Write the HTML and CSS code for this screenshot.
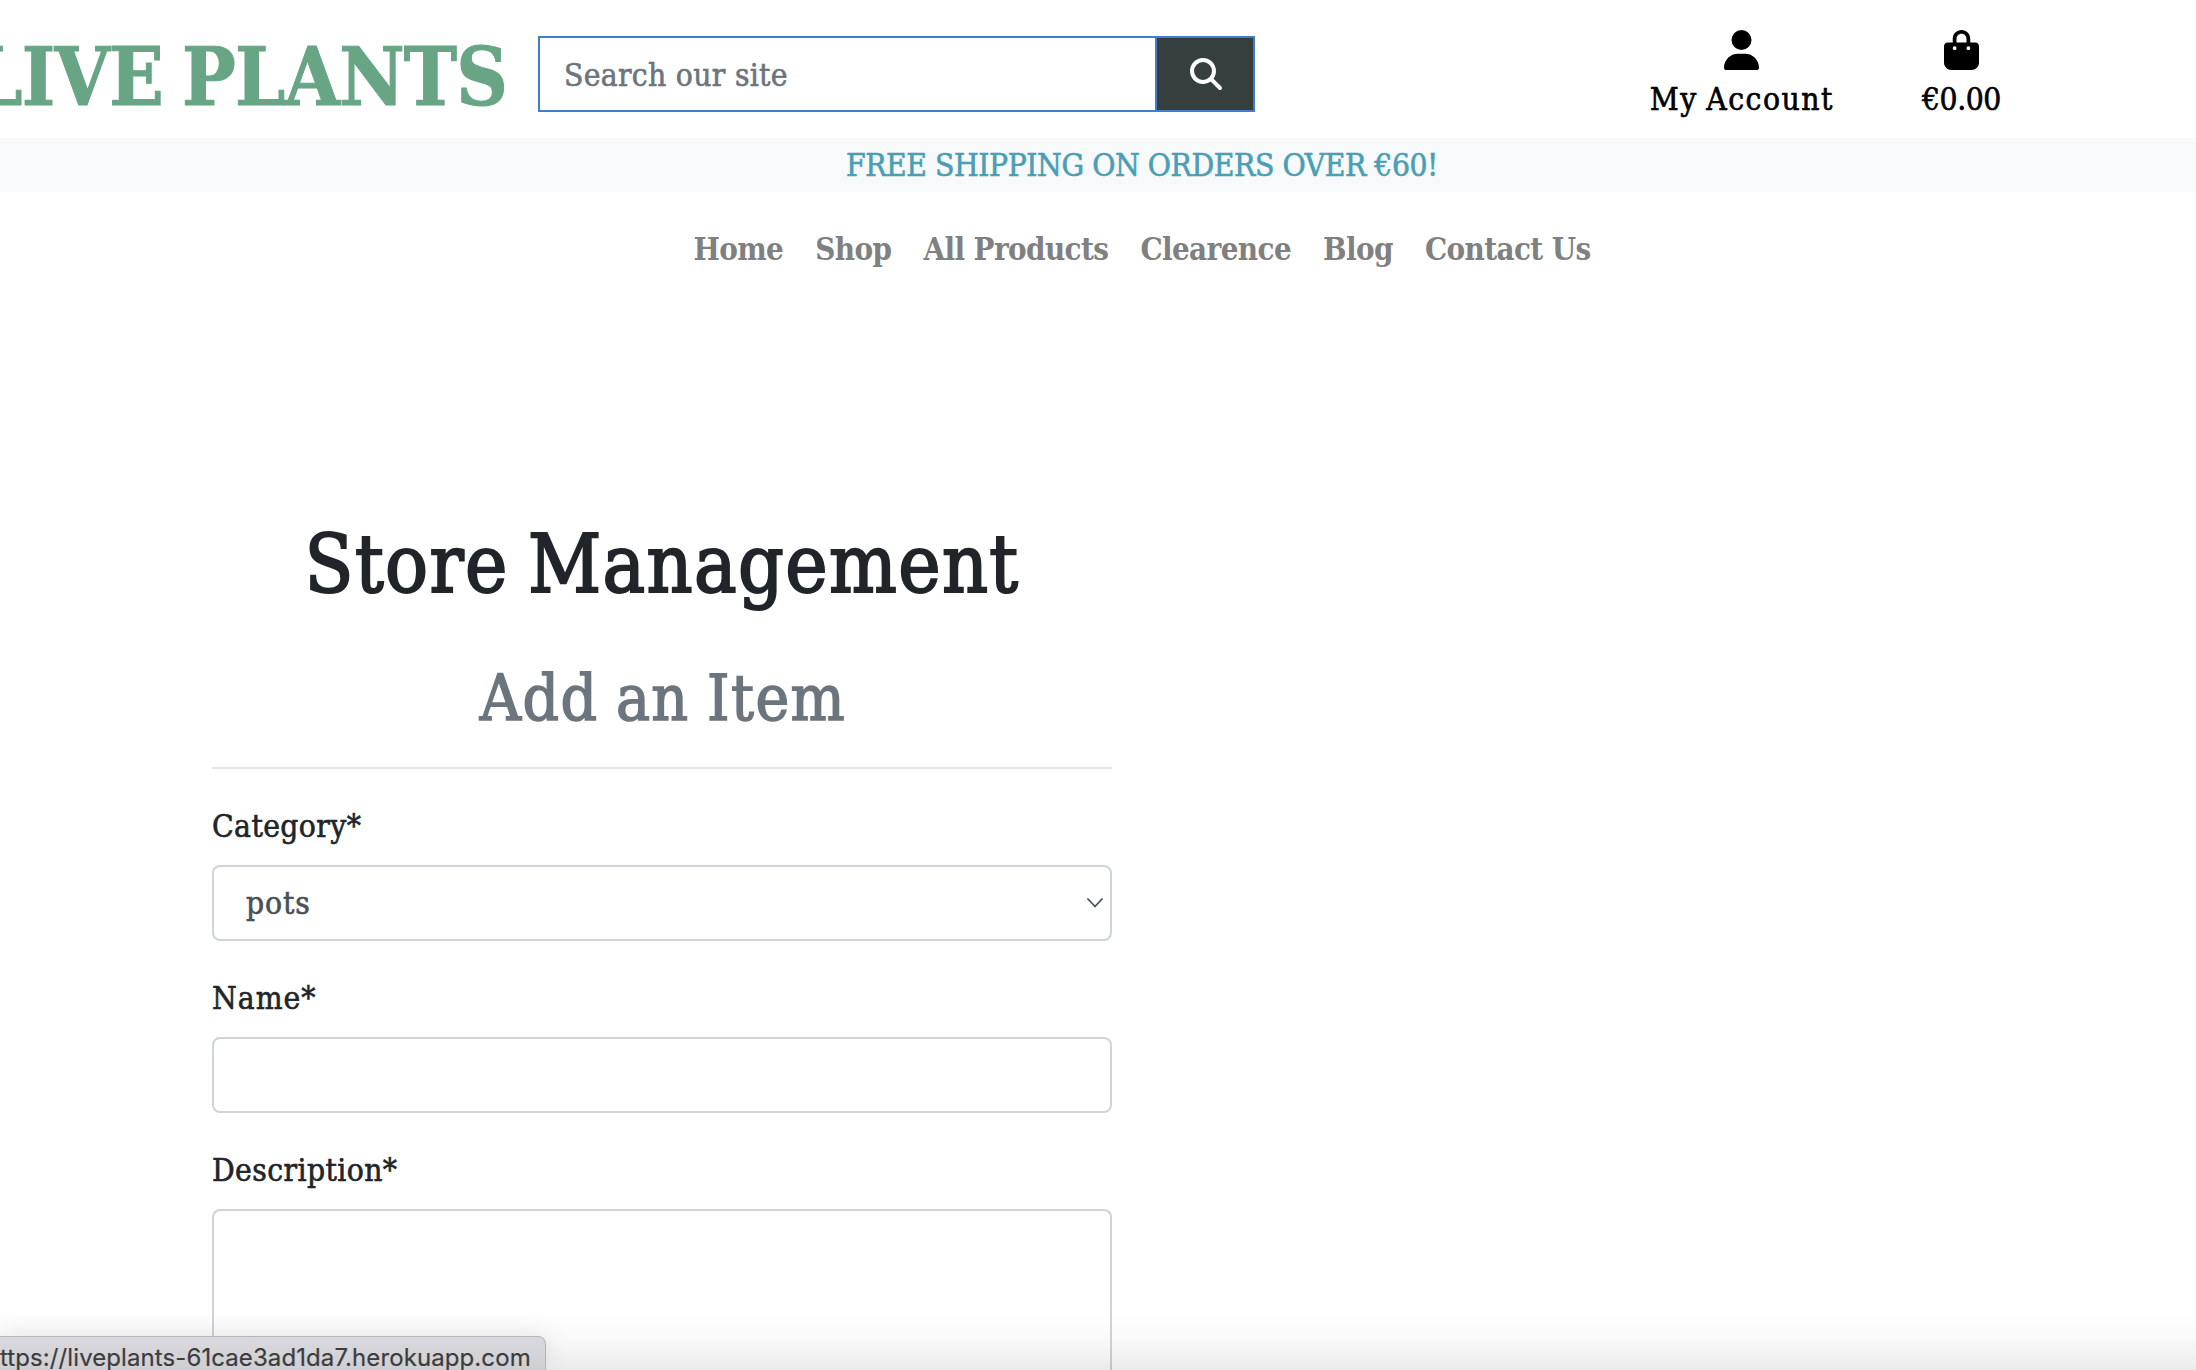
FILE: index.html
```html
<!DOCTYPE html>
<html lang="en">
<head>
<meta charset="utf-8">
<title>Live Plants</title>
<link rel="stylesheet" href="styles.css">
</head>
<body>
<header class="header">
  <a class="logo">LIVE PLANTS</a>
  <form class="search">
    <input class="search-input" type="text" placeholder="Search our site">
    <button class="search-button" type="button" aria-label="Search">
      <svg viewBox="0 0 512 512" width="32" height="32"><path fill="#fff" d="M416 208c0 45.900-14.900 88.300-40 122.700L502.600 457.400c12.500 12.500 12.500 32.800 0 45.300s-32.800 12.500-45.300 0L330.700 376c-34.400 25.200-76.800 40-122.700 40C93.100 416 0 322.900 0 208S93.100 0 208 0S416 93.100 416 208zM208 352a144 144 0 1 0 0-288 144 144 0 1 0 0 288z"/></svg>
    </button>
  </form>
  <div class="links">
    <a class="link">
      <svg viewBox="0 0 448 512" width="35" height="40"><path d="M224 256A128 128 0 1 0 224 0a128 128 0 1 0 0 256zm-45.700 48C79.800 304 0 383.800 0 482.300C0 498.700 13.300 512 29.700 512H418.300c16.400 0 29.700-13.300 29.700-29.700C448 383.800 368.200 304 269.700 304H178.300z"/></svg>
      <span class="account">My Account</span>
    </a>
    <a class="link">
      <svg viewBox="0 0 448 512" width="35" height="40"><path d="M160 112c0-35.300 28.700-64 64-64s64 28.700 64 64v48H160V112zm-48 48H48c-26.500 0-48 21.500-48 48V416c0 53 43 96 96 96H352c53 0 96-43 96-96V208c0-26.500-21.500-48-48-48H336V112C336 50.100 285.900 0 224 0S112 50.100 112 112v48zm24 48a24 24 0 1 1 0 48 24 24 0 1 1 0-48zm152 24a24 24 0 1 1 48 0 24 24 0 1 1 -48 0z"/></svg>
      <span class="total">€0.00</span>
    </a>
  </div>
</header>
<div class="banner">FREE SHIPPING ON ORDERS OVER €60!</div>
<nav class="nav">
  <a>Home</a><a>Shop</a><a>All Products</a><a>Clearence</a><a>Blog</a><a>Contact Us</a>
</nav>
<main class="main">
  <h1 class="title">Store Management</h1>
  <h2 class="subtitle">Add an Item</h2>
  <hr class="rule">
  <div class="group">
    <label class="label">Category*</label>
    <div class="control select">
      <span>pots</span>
      <svg viewBox="0 0 16 10" width="16" height="10"><path d="M1 1l7 7.500 7-7.500" fill="none" stroke="#495057" stroke-width="1.800" stroke-linecap="round" stroke-linejoin="round"/></svg>
    </div>
  </div>
  <div class="group">
    <label class="label name">Name*</label>
    <input class="control" type="text">
  </div>
  <div class="group">
    <label class="label">Description*</label>
    <textarea class="control area"></textarea>
  </div>
</main>
<div class="fade"></div>
<div class="status">ttps://liveplants-61cae3ad1da7.herokuapp.com</div>
</body>
</html>
```
FILE: styles.css
```css
* { box-sizing: border-box; }
body {
  margin: 0;
  height: 1370px;
  overflow: hidden;
  background: #fff;
  color: #212529;
  font: 31.5px/48px "DejaVu Serif Condensed", "DejaVu Serif", serif;
  -webkit-text-stroke: 0.6px currentColor;
}
svg { display: block; }
.header {
  display: flex;
  height: 138px;
  padding-right: 195px;
}
.logo {
  display: flex;
  justify-content: flex-end;
  width: 538px;
  padding: 29px 31px 0 0;
  color: #67a585;
  font-size: 79.5px;
  font-weight: 700;
  line-height: 96px;
  white-space: nowrap;
  letter-spacing: -0.8px;
  word-spacing: -5px;
  -webkit-text-stroke-width: 1px;
}
.search {
  display: flex;
  flex: none;
  width: 717px;
  height: 76px;
  margin-top: 36px;
}
.search-input {
  flex: 1;
  min-width: 0;
  padding: 2px 24px 0;
  border: 2px solid #417dcc;
  border-right: 0;
  border-radius: 0;
  font: inherit;
  letter-spacing: 0.3px;
  -webkit-text-stroke: inherit;
}
.search-input::placeholder { color: #6c757d; opacity: 1; }
.search-button {
  display: flex;
  justify-content: center;
  align-items: center;
  width: 100px;
  padding: 0 0 0 1px;
  border: 2px solid #417dcc;
  background: #343f3e;
}
.links {
  display: flex;
  gap: 88px;
  margin-left: auto;
  padding-top: 30px;
  color: #000;
}
.link {
  display: flex;
  flex-direction: column;
  align-items: center;
  gap: 5px;
}
.account { letter-spacing: 1.5px; word-spacing: -2px; }
.total { letter-spacing: -0.4px; }
.banner {
  height: 54px;
  padding-left: 88px;
  background: #f8f9fb;
  color: #4a9fb5;
  line-height: 55px;
  text-align: center;
  letter-spacing: -0.45px;
}
.nav {
  display: flex;
  justify-content: center;
  gap: 32px;
  padding: 33px 0 0 88px;
  color: #808080;
  font-size: 31px;
  font-weight: 700;
  letter-spacing: -0.6px;
  -webkit-text-stroke: 0;
}
.main {
  width: 900px;
  margin: 244px 0 0 212px;
}
.title, .subtitle {
  margin: 0;
  font-weight: 400;
  text-align: center;
}
.title {
  font-size: 79.5px;
  line-height: 96px;
  letter-spacing: 1.4px;
  word-spacing: -5px;
  -webkit-text-stroke-width: 2px;
}
.subtitle {
  margin-top: 47px;
  padding-left: 2px;
  color: #6c757d;
  font-size: 63.5px;
  line-height: 77px;
  letter-spacing: 1.4px;
  word-spacing: -2px;
  -webkit-text-stroke-width: 1.500px;
}
.rule {
  height: 2px;
  margin: 30px 0 32px;
  border: 0;
  background: #e5e5e5;
}
.group {
  display: flex;
  flex-direction: column;
  gap: 16px;
  margin-bottom: 32px;
}
.label { height: 48px; letter-spacing: 0.4px; line-height: 50px; }
.name { letter-spacing: 1px; }
.control {
  width: 100%;
  height: 76px;
  border: 2px solid #ced4da;
  border-radius: 8px;
  background: #fff;
  resize: none;
}
.select {
  display: flex;
  align-items: center;
  justify-content: space-between;
  padding: 0 7px 0 32px;
  color: #495057;
  letter-spacing: 0.9px;
}
.area { height: 161px; border-bottom: 0; border-radius: 8px 8px 0 0; }
.group:last-child { margin-bottom: 0; }
.fade {
  position: absolute;
  inset: auto 0 0 0;
  height: 64px;
  background: linear-gradient(rgba(0,0,0,0), rgba(0,0,0,.02) 50%, rgba(0,0,0,.08));
}
.status {
  position: absolute;
  left: 0;
  bottom: 0;
  width: 546px;
  height: 34px;
  border: 1px solid #b5b5b8;
  border-width: 1px 1px 0 0;
  border-radius: 0 8px 0 0;
  background: linear-gradient(#dadade, #cfcfd3);
  box-shadow: 0 0 24px rgba(0,0,0,.1);
  color: #3c3c40;
  font: 24px/41px Inter, sans-serif;
  letter-spacing: 0.09px;
  white-space: nowrap;
  -webkit-text-stroke: 0.2px currentColor;
}
```
